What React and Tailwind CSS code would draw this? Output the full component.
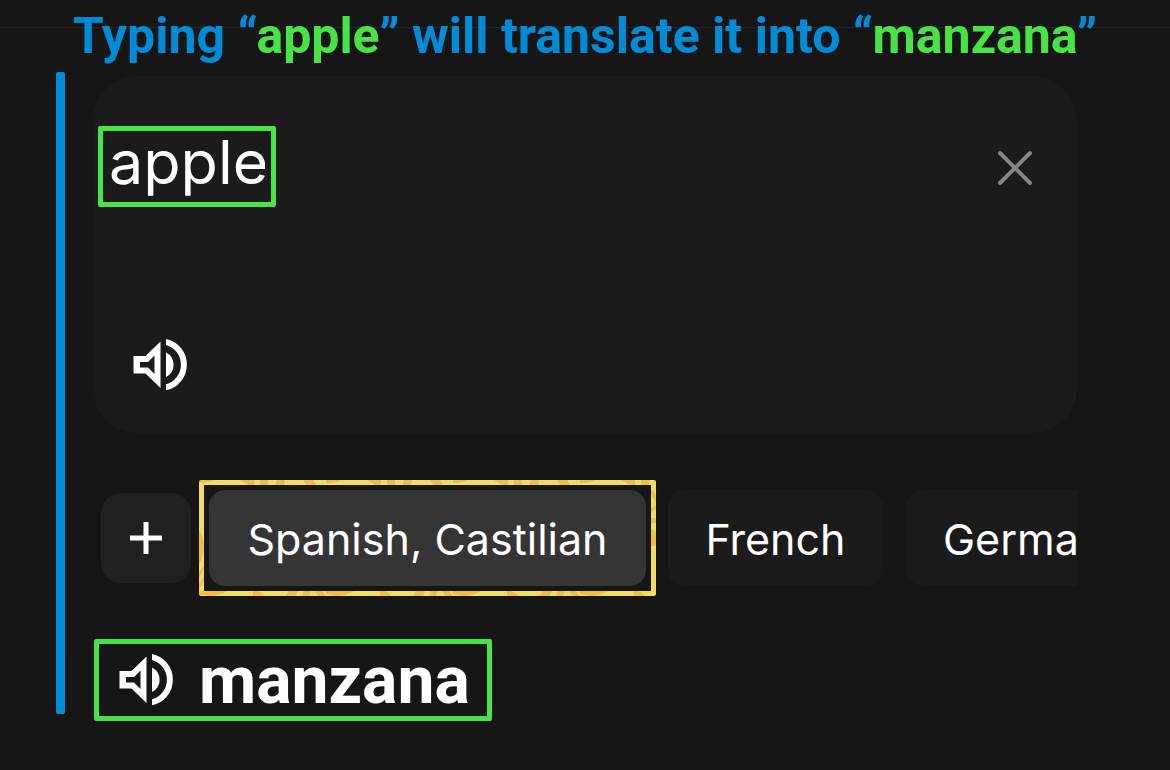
import { useState } from "react";

function SpeakerIcon() {
  return (
    <svg viewBox="0 0 54 52" className="h-[52px] w-[54px]" fill="currentColor" aria-hidden="true">
      <path
        fillRule="evenodd"
        d="M0.5 17H12.5L27.5 2.5V49L12.5 34.5H0.5ZM7 23V28.5H15L21.5 35V16.5L15 23Z"
      />
      <path d="M33 13.5A13.7 13.7 0 0 1 33 38Z" />
      <path d="M33 0A26.2 26.2 0 0 1 33 51.3V45.3A20.4 20.4 0 0 0 33 6Z" />
    </svg>
  );
}

function GoldTexture() {
  return (
    <svg className="absolute inset-0 size-full rounded-xs" aria-hidden="true">
      <defs>
        <pattern id="gold" width="127" height="127" patternUnits="userSpaceOnUse">
          <rect width="127" height="127" fill="#f1de60" />
          <g fill="#efc03c">
            <path d="M0 0H15Q10 3 5 3H0Z" />
            <path d="M41 0H55V6H50Q47 3 41 0Z" />
            <path d="M61 0H69V6H61Z" />
            <path d="M78 0H86L85 6H76Z" />
            <path d="M104 0H114L118 6H108Z" />
            <path d="M71 10Q76 12 76 17V22L71 16Z" />
            <path d="M71 28L77 25V29L71 32Z" />
            <path d="M71 38H77V43H71Z" />
            <path d="M71 49L77 52V66H71Z" />
            <path d="M0 50Q5 56 5 68Q4 78 0 84Z" />
            <path d="M0 92L5 86V90L0 97ZM0 104L5 96V101L0 110Z" />
            <path d="M0 111H28Q20 116 10 116L0 114Z" />
            <path d="M54 110Q62 111 65 116H54Z" />
            <path d="M90 110H99L97 116H87Z" />
            <path d="M105 110H112L110 116H103Z" />
            <path d="M116 110H122L127 116H119Z" />
          </g>
        </pattern>
      </defs>
      <rect width="100%" height="100%" fill="url(#gold)" />
    </svg>
  );
}

export default function App() {
  const [word, setWord] = useState("apple");
  return (
    <div className="min-h-screen overflow-hidden bg-[#161616] font-['Roboto',sans-serif] text-white">
      <header className="relative h-[72px]">
        <div className="absolute inset-x-0 top-[27px] h-px bg-[#242424]" />
        <h1 className="relative pt-1 text-center text-[50px] leading-[64px] font-bold whitespace-nowrap text-[#008cd6]">
          Typing “<span className="text-[#48e345]">apple</span>” will translate it into “
          <span className="text-[#48e345]">manzana</span>”
        </h1>
      </header>

      <main className="flex pr-[93px] pl-14">
        <div className="w-[9px] shrink-0 rounded-xs bg-[#008cd6]" />
        <div className="ml-7 flex min-w-0 flex-1 flex-col pt-1 font-['Inter',sans-serif]">
          <section className="flex h-[357px] flex-col justify-between rounded-[44px] bg-[#1b1b1b]">
            <div className="flex items-start justify-between pt-[50px] pr-10 pl-[5px]">
              <input
                aria-label="Text to translate"
                value={word}
                onChange={(e) => setWord(e.target.value)}
                className="h-[81px] w-[178px] rounded-xs border-[5px] border-[#48e345] bg-transparent px-[6px] pb-2 text-[61px] outline-none"
              />
              <button type="button" aria-label="Clear" onClick={() => setWord("")} className="mt-5 p-1">
                <svg viewBox="0 0 36 36" className="size-9" fill="none" stroke="#858585" strokeWidth="4" strokeLinecap="round">
                  <path d="M3 3L33 33M33 3L3 33" />
                </svg>
              </button>
            </div>
            <button type="button" aria-label="Listen to the source text" className="mb-[42px] ml-10 self-start">
              <SpeakerIcon />
            </button>
          </section>

          <nav aria-label="Target language" className="mt-[47px] flex items-center overflow-hidden pl-2 text-[43px] whitespace-nowrap">
            <button type="button" aria-label="Add language" className="flex size-[90px] shrink-0 items-center justify-center rounded-[20px] bg-[#212121]">
              <svg viewBox="0 0 32 32" className="size-8" fill="none" stroke="currentColor" strokeWidth="5">
                <path d="M0 16H32M16 0V32" />
              </svg>
            </button>
            <div className="relative ml-2 h-[116px] w-[457px] shrink-0 p-[5px]">
              <GoldTexture />
              <div className="relative flex h-full bg-[#161616] p-[5px]">
                <button type="button" className="flex-1 rounded-[16px] bg-[#353535] pt-0.5">
                  Spanish, Castilian
                </button>
              </div>
            </div>
            <button type="button" className="ml-3 h-24 w-[215px] shrink-0 rounded-[16px] bg-[#1b1b1b] pt-0.5">
              French
            </button>
            <button type="button" className="ml-6 h-24 shrink-0 rounded-[16px] bg-[#1b1b1b] px-9 pt-0.5">
              German
            </button>
          </nav>

          <section className="mt-[43px] mb-[-7px] ml-px flex h-[82px] w-[398px] items-center rounded-xs border-[5px] border-[#48e345] pl-5">
            <button type="button" aria-label="Listen to the translation">
              <SpeakerIcon />
            </button>
            <p className="ml-[26px] pt-0.5 font-['Roboto',sans-serif] text-[66px] leading-[72px] font-bold">manzana</p>
          </section>
        </div>
      </main>
    </div>
  );
}
